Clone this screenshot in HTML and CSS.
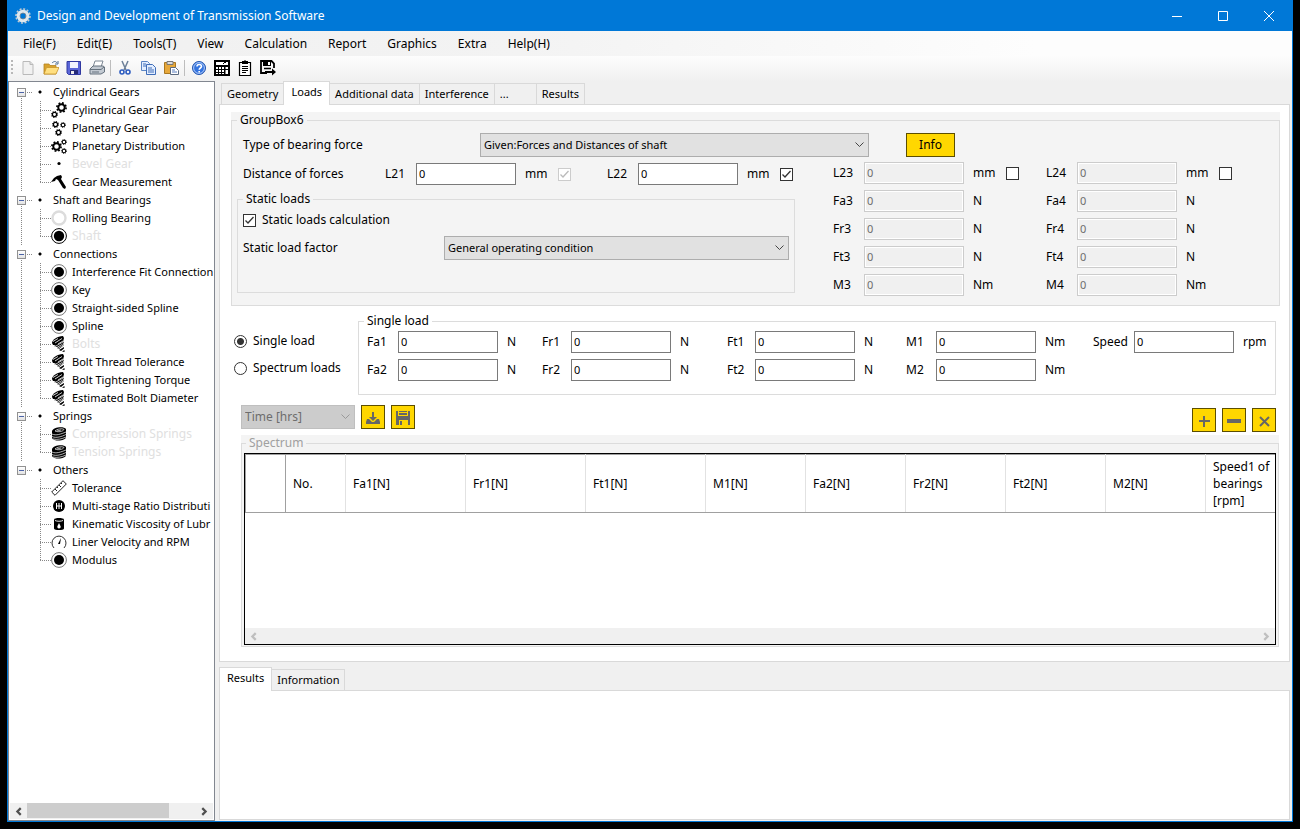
FILE: index.html
```html
<!DOCTYPE html>
<html lang="en">
<head>
    <meta charset="UTF-8">
    <meta name="viewport" content="width=device-width, initial-scale=1.0">
    <title>Design and Development of Transmission Software</title>
    <link rel="stylesheet" href="styles.css">
</head>
<body>

    <!-- Shared icon shapes -->
    <svg class="sprite" aria-hidden="true">
        <symbol id="gear" viewBox="0 0 16 16">
            <circle cx="8" cy="8" r="4.7" fill="none" stroke="currentColor" stroke-width="2.8"/>
            <circle cx="8" cy="8" r="6.7" fill="none" stroke="currentColor" stroke-width="2.4" stroke-dasharray="2.6 2.66"/>
        </symbol>
        <symbol id="i-pair" viewBox="0 0 16 16">
            <use href="#gear" x="5" y="0" width="11" height="11"/>
            <use href="#gear" x="0" y="9" width="7" height="7"/>
        </symbol>
        <symbol id="i-planet" viewBox="0 0 16 16">
            <use href="#gear" x="1" y="1" width="7" height="7"/>
            <use href="#gear" x="9" y="2" width="6" height="6"/>
            <use href="#gear" x="4" y="9" width="7" height="7"/>
        </symbol>
        <symbol id="i-dist" viewBox="0 0 16 16">
            <use href="#gear" x="0" y="3" width="11" height="11"/>
            <use href="#gear" x="10" y="1" width="6" height="6"/>
            <use href="#gear" x="10" y="10" width="6" height="6"/>
        </symbol>
        <symbol id="i-dot" viewBox="0 0 16 16">
            <circle cx="8" cy="7.5" r="1.6"/>
        </symbol>
        <symbol id="i-hammer" viewBox="0 0 16 16">
            <path d="M0 8 3 4l3-2 4-1 1 2-1 2 5 8-1 2-2-1-5-8-2-1-1 2z"/>
        </symbol>
        <symbol id="i-ring" viewBox="0 0 16 16">
            <circle cx="8" cy="8" r="6.5" fill="none" stroke="#dcdcdc" stroke-width="2.4"/>
        </symbol>
        <symbol id="i-disc" viewBox="0 0 16 16">
            <circle cx="8" cy="8" r="7.4" fill="none" stroke="#777"/>
            <circle cx="8" cy="8" r="5"/>
        </symbol>
        <symbol id="i-disc-dark" viewBox="0 0 16 16">
            <circle cx="8" cy="8" r="7.4" fill="none" stroke="#000"/>
            <circle cx="8" cy="8" r="5.2"/>
        </symbol>
        <symbol id="i-bolt" viewBox="0 0 16 16">
            <path d="M1 7C1 4 6 0 12 0l1 2-1 4-6 3-4 0z"/>
            <path d="m3 10 9-5 1 2-7 4zM6 12l6-4 1 1-5 4zM8 14l5-3 0 1.500-3 2.500zM11 15.500l2.500-1.500 0 2z"/>
            <path d="m2 5.500 5-3M4 7l7-4.500M7 8l5-3" stroke="#fff" stroke-width=".8"/>
            <path d="m4 10.500 9-5M7 12.500l6-4" stroke="#fff" stroke-width=".7"/>
        </symbol>
        <symbol id="i-spring" viewBox="0 0 16 16">
            <path d="M1 5c1-4 12-5 14-2v8c0 4-12 5-14 1z"/>
            <path d="M4 5c2-2 7-3 9-1.500-1 2-6 3-9 1.500M1 8c4 2 9 0 14-2M1 10.500c4 2 10 0 14-2M2 13c4 1 9 0 13-2M6 5l4-1" fill="none" stroke="#fff" stroke-width=".7"/>
        </symbol>
        <symbol id="i-ruler" viewBox="0 0 16 16">
            <path d="M.7 12 12 .7l3.300 3.300L4 15.300zM4 9l2 2M6 7l1 1M8 5l2 2M10 3l1 1" fill="none" stroke="#222"/>
        </symbol>
        <symbol id="i-ratio" viewBox="0 0 16 16">
            <circle cx="8" cy="8" r="6"/>
            <path d="M5.500 5v6M8 5v6M10.500 5v6M5 8h6" stroke="#fff" fill="none"/>
        </symbol>
        <symbol id="i-oil" viewBox="0 0 16 16">
            <path d="M3 3.500c0-2 10-2 10 0v9c0 2-10 2-10 0z"/>
            <path d="M4 4.500c2 1 6 1 8 0" fill="none" stroke="#fff" stroke-width=".9"/>
            <path d="M8 7 6.500 10a1.700 1.700 0 1 0 3 0z" fill="#fff"/>
        </symbol>
        <symbol id="i-gauge" viewBox="0 0 16 16">
            <path d="M3 14a7 7 0 1 1 10 0" fill="none" stroke="#333"/>
            <path d="m7 10 3-6-1 6z"/>
        </symbol>
    </svg>

    <div class="window">
        <header class="titlebar">
            <svg class="app-icon" viewBox="0 0 16 16"><circle cx="8" cy="8" r="4.6" fill="none" stroke="#dfe8ee" stroke-width="3.4"/><circle cx="8" cy="8" r="7" fill="none" stroke="#c3ccd3" stroke-width="1.6" stroke-dasharray="2 1.66"/><circle cx="8" cy="8" r="3" fill="none" stroke="#76818a" stroke-width=".8"/></svg>
            <h1>Design and Development of Transmission Software</h1>
            <div class="window-buttons">
                <button type="button" aria-label="Minimize"><svg viewBox="0 0 12 12"><path d="M1 6.500h10"/></svg></button>
                <button type="button" aria-label="Maximize"><svg viewBox="0 0 12 12"><path d="M1.500 1.500h9v9h-9z"/></svg></button>
                <button type="button" aria-label="Close"><svg viewBox="0 0 12 12"><path d="m1 1 10 10M11 1 1 11"/></svg></button>
            </div>
        </header>

        <nav class="menubar">
            <button type="button">File(F)</button>
            <button type="button">Edit(E)</button>
            <button type="button">Tools(T)</button>
            <button type="button">View</button>
            <button type="button">Calculation</button>
            <button type="button">Report</button>
            <button type="button">Graphics</button>
            <button type="button">Extra</button>
            <button type="button">Help(H)</button>
        </nav>

        <div class="toolbar">
            <span class="grip"></span>
            <button type="button" aria-label="New"><svg viewBox="0 0 16 16"><path d="M3 1.500h7l3 3v10H3z" fill="#f1f1f1" stroke="#b9b9b9"/><path d="M10 1.500v3h3" fill="#ddd" stroke="#b9b9b9"/></svg></button>
            <button type="button" aria-label="Open"><svg viewBox="0 0 16 16"><path d="M1 4h5l1 1.500h6V14H1z" fill="#d9a22c" stroke="#b58420" stroke-width=".8"/><path d="M3.500 7.500H16L13 14H1z" fill="#ffdf80" stroke="#c8962b" stroke-width=".8"/><path d="M9 3c2-2 4-2 5 0m1-2v3h-3" fill="none" stroke="#4f6f94"/></svg></button>
            <button type="button" aria-label="Save"><svg viewBox="0 0 16 16"><path d="M1 1.500h13.500v13H2.500L1 13z" fill="#5a66d8" stroke="#3038a0"/><path d="M4 2h8v6H4z" fill="#f2f5ff"/><path d="M4 10h8v4H4z" fill="#252a78"/><path d="M5 11h3v3H5z" fill="#eee"/></svg></button>
            <button type="button" aria-label="Print"><svg viewBox="0 0 16 16"><path d="M6 1h8l-2 6H4z" fill="#fff" stroke="#7d8894"/><path d="m1 9 3-3h10l1.500 1v5L12 14H1z" fill="#c3cad2" stroke="#66727e"/><path d="M1 9.500h11l3-2.500M3 12h7" fill="none" stroke="#66727e"/></svg></button>
            <span class="separator"></span>
            <button type="button" aria-label="Cut"><svg viewBox="0 0 16 16"><path d="m5 1 4 9M11 1 7 10" fill="none" stroke="#6c7f98" stroke-width="1.500"/><circle cx="5" cy="12" r="2" fill="none" stroke="#2d5cc0" stroke-width="1.600"/><circle cx="11" cy="12" r="2" fill="none" stroke="#2d5cc0" stroke-width="1.600"/></svg></button>
            <button type="button" aria-label="Copy"><svg viewBox="0 0 16 16"><path d="M1.500 1.500h6l2 2v7h-8z" fill="#e3eeff" stroke="#5a84c4"/><path d="M6.500 4.500h6l3 3v7h-9z" fill="#e3eeff" stroke="#3f6db8"/><path d="M3 4h3M3 6h3M8 8h4M8 10h6M8 12h6" stroke="#3f6db8"/></svg></button>
            <button type="button" aria-label="Paste"><svg viewBox="0 0 16 16"><path d="M1.500 2.500h11v11h-11z" fill="#e7a83a" stroke="#a97720"/><path d="M4 1.500h6v3H4z" fill="#ddd" stroke="#777"/><path d="M7.500 7.500h5l3 3v4h-8z" fill="#fff" stroke="#5b6a80"/><path d="M9 10h3M9 12h5" stroke="#5b7fc0"/></svg></button>
            <span class="separator"></span>
            <button type="button" aria-label="Help"><svg viewBox="0 0 16 16"><circle cx="8" cy="8" r="6.500" fill="#3474df" stroke="#2456ae"/><circle cx="8" cy="8" r="5.400" fill="none" stroke="#cfe0ff" stroke-width=".8"/><path d="M6 6.500c0-3 4.500-2.500 4.500 0C10.500 8 8.200 8 8.200 9.700M8.200 11v1.500" fill="none" stroke="#fff" stroke-width="1.600"/></svg></button>
            <button type="button" aria-label="Calculator"><svg viewBox="0 0 16 16"><path d="M0 0h16v16H0z"/><path d="M2 2h12v3H2zM2 7h2v2H2zM5 7h2v2H5zM8 7h2v2H8zM2 10h2v2H2zM5 10h2v2H5zM8 10h2v2H8zM2 13h2v1H2zM5 13h2v1H5zM8 13h2v1H8zM11.500 7H14v2h-2.500zM11.500 10H14v4h-2.500z" fill="#fff"/><path d="m9 4 2-2 1 1" fill="none" stroke="#000"/></svg></button>
            <button type="button" aria-label="Report"><svg viewBox="0 0 16 16"><path d="M2.500 2.500h11v13h-11z" fill="#fff" stroke="#000" stroke-width="1.200"/><path d="M5 1h2l1-1 1 1h2v3H5z"/><path d="M5 6.500h6M5 8.500h6M5 10.500h6M5 12.500h4" stroke="#000"/></svg></button>
            <button type="button" aria-label="Save as"><svg viewBox="0 0 16 16"><path d="M14 8V3.500L11.500 1H1v12h6" fill="none" stroke="#000" stroke-width="1.800"/><path d="M3 1h8v5H3z"/><path d="M8 2h2v3H8z" fill="#fff"/><path d="M4 8.500h7" stroke="#000" stroke-width="1.500"/><path d="M5 11h7V8.500l4 3.500-4 3.500V13H5z"/></svg></button>
        </div>

        <div class="workspace">
            <aside class="sidebar">
                <ul class="tree">
                    <li>
                        <div class="branch"><button type="button" class="expander" aria-label="Collapse"></button>Cylindrical Gears</div>
                        <ul>
                            <li><svg><use href="#i-pair"/></svg><a href="#">Cylindrical Gear Pair</a></li>
                            <li><svg><use href="#i-planet"/></svg><a href="#">Planetary Gear</a></li>
                            <li><svg><use href="#i-dist"/></svg><a href="#">Planetary Distribution</a></li>
                            <li><svg><use href="#i-dot"/></svg><a href="#" class="off">Bevel Gear</a></li>
                            <li><svg><use href="#i-hammer"/></svg><a href="#">Gear Measurement</a></li>
                        </ul>
                    </li>
                    <li>
                        <div class="branch"><button type="button" class="expander" aria-label="Collapse"></button>Shaft and Bearings</div>
                        <ul>
                            <li><svg><use href="#i-ring"/></svg><a href="#">Rolling Bearing</a></li>
                            <li><svg><use href="#i-disc-dark"/></svg><a href="#" class="off">Shaft</a></li>
                        </ul>
                    </li>
                    <li>
                        <div class="branch"><button type="button" class="expander" aria-label="Collapse"></button>Connections</div>
                        <ul>
                            <li><svg><use href="#i-disc"/></svg><a href="#">Interference Fit Connection</a></li>
                            <li><svg><use href="#i-disc"/></svg><a href="#">Key</a></li>
                            <li><svg><use href="#i-disc"/></svg><a href="#">Straight-sided Spline</a></li>
                            <li><svg><use href="#i-disc"/></svg><a href="#">Spline</a></li>
                            <li><svg><use href="#i-bolt"/></svg><a href="#" class="off">Bolts</a></li>
                            <li><svg><use href="#i-bolt"/></svg><a href="#">Bolt Thread Tolerance</a></li>
                            <li><svg><use href="#i-bolt"/></svg><a href="#">Bolt Tightening Torque</a></li>
                            <li><svg><use href="#i-bolt"/></svg><a href="#">Estimated Bolt Diameter</a></li>
                        </ul>
                    </li>
                    <li>
                        <div class="branch"><button type="button" class="expander" aria-label="Collapse"></button>Springs</div>
                        <ul>
                            <li><svg><use href="#i-spring"/></svg><a href="#" class="off">Compression Springs</a></li>
                            <li><svg><use href="#i-spring"/></svg><a href="#" class="off">Tension Springs</a></li>
                        </ul>
                    </li>
                    <li>
                        <div class="branch"><button type="button" class="expander" aria-label="Collapse"></button>Others</div>
                        <ul>
                            <li><svg><use href="#i-ruler"/></svg><a href="#">Tolerance</a></li>
                            <li><svg><use href="#i-ratio"/></svg><a href="#">Multi-stage Ratio Distributi</a></li>
                            <li><svg><use href="#i-oil"/></svg><a href="#">Kinematic Viscosity of Lubr</a></li>
                            <li><svg><use href="#i-gauge"/></svg><a href="#">Liner Velocity and RPM</a></li>
                            <li><svg><use href="#i-disc"/></svg><a href="#">Modulus</a></li>
                        </ul>
                    </li>
                </ul>
                <div class="scrollbar">
                    <button type="button" aria-label="Scroll left"><svg viewBox="0 0 8 8"><path d="M6 1 3 4l3 3"/></svg></button>
                    <div class="track"><div class="thumb"></div></div>
                    <button type="button" aria-label="Scroll right"><svg viewBox="0 0 8 8"><path d="m2 1 3 3-3 3"/></svg></button>
                </div>
            </aside>

            <main class="content">
                <div class="tabs" role="tablist">
                    <button type="button" role="tab">Geometry</button>
                    <button type="button" role="tab" class="active" aria-selected="true">Loads</button>
                    <button type="button" role="tab">Additional data</button>
                    <button type="button" role="tab">Interference</button>
                    <button type="button" role="tab" class="more">...</button>
                    <button type="button" role="tab">Results</button>
                </div>

                <section class="page">
                    <div class="panel">
                        <fieldset class="forces">
                            <legend>GroupBox6</legend>
                            <div class="bearing-row">
                                <label for="force-type">Type of bearing force</label>
                                <select id="force-type"><option>Given:Forces and Distances of shaft</option></select>
                                <button type="button" class="yellow info">Info</button>
                            </div>
                            <div class="forces-body">
                                <div class="forces-left">
                                    <div class="distance-row">
                                        <span class="caption">Distance of forces</span>
                                        <div class="field"><label for="l21">L21</label><input type="text" id="l21" value="0"><span class="unit">mm</span><input type="checkbox" aria-label="Use L21" checked disabled></div>
                                        <div class="field"><label for="l22">L22</label><input type="text" id="l22" value="0"><span class="unit">mm</span><input type="checkbox" aria-label="Use L22" checked></div>
                                    </div>
                                    <fieldset class="static-loads">
                                        <legend>Static loads</legend>
                                        <label class="check"><input type="checkbox" checked>Static loads calculation</label>
                                        <div class="factor-row">
                                            <label for="factor">Static load factor</label>
                                            <select id="factor"><option>General operating condition</option></select>
                                        </div>
                                    </fieldset>
                                </div>
                                <div class="force-column">
                                    <div class="field"><label for="l23">L23</label><input type="text" id="l23" value="0" disabled><span class="unit">mm</span><input type="checkbox" aria-label="Use L23"></div>
                                    <div class="field"><label for="fa3">Fa3</label><input type="text" id="fa3" value="0" disabled><span class="unit">N</span></div>
                                    <div class="field"><label for="fr3">Fr3</label><input type="text" id="fr3" value="0" disabled><span class="unit">N</span></div>
                                    <div class="field"><label for="ft3">Ft3</label><input type="text" id="ft3" value="0" disabled><span class="unit">N</span></div>
                                    <div class="field"><label for="m3">M3</label><input type="text" id="m3" value="0" disabled><span class="unit">Nm</span></div>
                                </div>
                                <div class="force-column">
                                    <div class="field"><label for="l24">L24</label><input type="text" id="l24" value="0" disabled><span class="unit">mm</span><input type="checkbox" aria-label="Use L24"></div>
                                    <div class="field"><label for="fa4">Fa4</label><input type="text" id="fa4" value="0" disabled><span class="unit">N</span></div>
                                    <div class="field"><label for="fr4">Fr4</label><input type="text" id="fr4" value="0" disabled><span class="unit">N</span></div>
                                    <div class="field"><label for="ft4">Ft4</label><input type="text" id="ft4" value="0" disabled><span class="unit">N</span></div>
                                    <div class="field"><label for="m4">M4</label><input type="text" id="m4" value="0" disabled><span class="unit">Nm</span></div>
                                </div>
                            </div>
                        </fieldset>
                    </div>

                    <div class="load-row">
                        <div class="load-mode">
                            <label class="check"><input type="radio" name="mode" checked>Single load</label>
                            <label class="check"><input type="radio" name="mode">Spectrum loads</label>
                        </div>
                        <fieldset class="single-load">
                            <legend>Single load</legend>
                            <div class="load-grid">
                                <label for="fa1">Fa1</label><input type="text" id="fa1" value="0"><span class="unit">N</span>
                                <label for="fr1">Fr1</label><input type="text" id="fr1" value="0"><span class="unit">N</span>
                                <label for="ft1">Ft1</label><input type="text" id="ft1" value="0"><span class="unit">N</span>
                                <label for="m1">M1</label><input type="text" id="m1" value="0"><span class="unit">Nm</span>
                                <label for="speed">Speed</label><input type="text" id="speed" value="0"><span class="unit">rpm</span>
                                <label for="fa2">Fa2</label><input type="text" id="fa2" value="0"><span class="unit">N</span>
                                <label for="fr2">Fr2</label><input type="text" id="fr2" value="0"><span class="unit">N</span>
                                <label for="ft2">Ft2</label><input type="text" id="ft2" value="0"><span class="unit">N</span>
                                <label for="m2">M2</label><input type="text" id="m2" value="0"><span class="unit">Nm</span>
                            </div>
                        </fieldset>
                    </div>

                    <div class="spectrum-tools">
                        <select class="time" aria-label="Time unit" disabled><option>Time [hrs]</option></select>
                        <button type="button" class="yellow" aria-label="Import"><svg viewBox="0 0 16 16"><path d="M7 2h2v5h3L8 11 4 7h3z"/><path d="M2 9h2l3 3h2l3-3h2l1 3v2H1v-2z"/></svg></button>
                        <button type="button" class="yellow" aria-label="Save spectrum"><svg viewBox="0 0 16 16"><path d="M1 1h2v5h10V1h2v14h-2v-5H4v5H1z"/><path d="M4 1h8v1H4zM4 3h8v2H4zM5 11h2v4H5z"/></svg></button>
                        <span class="spacer"></span>
                        <button type="button" class="yellow low" aria-label="Add row"><svg viewBox="0 0 16 16"><path d="M7 3h2v4h5v2H9v5H7V9H3V7h4z"/></svg></button>
                        <button type="button" class="yellow low" aria-label="Remove row"><svg viewBox="0 0 16 16"><path d="M1 6h14v4H1z"/></svg></button>
                        <button type="button" class="yellow low" aria-label="Clear"><svg viewBox="0 0 16 16"><path d="m4 4 9 9M13 4 4 13" stroke="#666" stroke-width="2"/></svg></button>
                    </div>

                    <div class="panel spectrum-panel">
                        <fieldset class="spectrum">
                            <legend>Spectrum</legend>
                            <div class="grid-view">
                                <div class="grid-clip">
                                    <table>
                                        <colgroup>
                                            <col class="w-40"><col class="w-60"><col class="w-120"><col class="w-120"><col class="w-120">
                                            <col class="w-100"><col class="w-100"><col class="w-100"><col class="w-100"><col class="w-100"><col class="w-100">
                                        </colgroup>
                                        <thead>
                                            <tr>
                                                <td></td><th>No.</th><th>Fa1[N]</th><th>Fr1[N]</th><th>Ft1[N]</th><th>M1[N]</th>
                                                <th>Fa2[N]</th><th>Fr2[N]</th><th>Ft2[N]</th><th>M2[N]</th><th>Speed1 of bearings [rpm]</th>
                                            </tr>
                                        </thead>
                                    </table>
                                </div>
                                <div class="scrollbar idle">
                                    <button type="button" aria-label="Scroll left"><svg viewBox="0 0 8 8"><path d="M6 1 3 4l3 3"/></svg></button>
                                    <div class="track"></div>
                                    <button type="button" aria-label="Scroll right"><svg viewBox="0 0 8 8"><path d="m2 1 3 3-3 3"/></svg></button>
                                </div>
                            </div>
                        </fieldset>
                    </div>
                </section>

                <div class="tabs result-tabs" role="tablist">
                    <button type="button" role="tab" class="active" aria-selected="true">Results</button>
                    <button type="button" role="tab">Information</button>
                </div>
                <section class="results"></section>
            </main>
        </div>
    </div>

</body>
</html>
```

FILE: styles.css
```css
* {
    box-sizing: border-box;
}

body {
    margin: 0;
    padding: 0 7px 7px;
    height: 100vh;
    background: #000;
    color: #000;
    font-family: "Noto Sans", "Open Sans", sans-serif;
    font-size: 12px;
    line-height: 16px;
    overflow: hidden;
}

button, input, select {
    font: inherit;
    color: inherit;
    margin: 0;
    padding: 0;
    border: 0;
    border-radius: 0;
    background: none;
}

.sprite {
    position: absolute;
    width: 0;
    height: 0;
}

.window {
    display: flex;
    flex-direction: column;
    height: 100%;
    border: 1px solid #0078d7;
    border-top: 0;
    background: #f0f0f0;
}

/* Title bar */
.titlebar {
    display: flex;
    align-items: center;
    height: 31px;
    flex: none;
    background: #0078d7;
    color: #fff;
}

.app-icon {
    width: 16px;
    height: 16px;
    margin: 0 6px 0 7px;
}

.titlebar h1 {
    margin: 0;
    flex: 1;
    font-size: 12px;
    font-weight: normal;
}

.window-buttons {
    display: flex;
}

.window-buttons button {
    width: 46px;
    height: 31px;
}

.window-buttons svg {
    width: 12px;
    height: 12px;
    display: block;
    margin: 0 auto;
    fill: none;
    stroke: #fff;
}

/* Menu and toolbar */
.menubar {
    display: flex;
    flex: none;
    gap: 1px;
    height: 25px;
    padding-left: 5px;
    background: linear-gradient(90deg, #f0f0f0, #f3f3f3 40%, #fdfdfd 80%);
}

.menubar button {
    padding: 0 10px;
}

.toolbar {
    display: flex;
    align-items: center;
    flex: none;
    height: 25px;
    padding: 0 0 2px 3px;
    background: linear-gradient(#fdfdfd, #f0f0f0);
}

.toolbar button {
    width: 23px;
    height: 22px;
}

.toolbar svg {
    display: block;
    width: 16px;
    height: 16px;
    margin: 0 auto;
}

.grip {
    width: 2px;
    height: 16px;
    margin-right: 3px;
    background: repeating-linear-gradient(#b8b8b8 0 2px, transparent 2px 4px);
}

.separator {
    width: 1px;
    height: 16px;
    margin: 0 2px;
    background: #bdbdbd;
}

.workspace {
    display: flex;
    flex: 1;
    min-height: 0;
}

/* Tree */
.sidebar {
    display: flex;
    flex-direction: column;
    flex: none;
    width: 207px;
    padding: 1px;
    border: 1px solid #828790;
    background: #fff;
}

.tree {
    flex: 1;
    overflow: hidden;
    font-size: 11px;
}

.tree, .tree ul {
    margin: 0;
    padding: 0;
    list-style: none;
}

.tree li {
    white-space: nowrap;
}

/* dotted trunk down the left side, dropped for the last branch */
.tree > li {
    background: repeating-linear-gradient(#888 0 1px, transparent 1px 2px) 11px 9px / 1px 100% no-repeat;
}

.tree > li:last-child {
    background: none;
}

.branch {
    display: flex;
    align-items: center;
    height: 18px;
    padding-left: 7px;
    background: radial-gradient(circle at 2px 2px, #000 0 1px, transparent 2px) 28px 7px / 4px 4px no-repeat,
        repeating-linear-gradient(90deg, #888 0 1px, transparent 1px 2px) 17px 9px / 6px 1px no-repeat;
}

.expander {
    width: 9px;
    height: 9px;
    margin-right: 27px;
    border: 1px solid #919191;
    background: linear-gradient(#4b63a7, #4b63a7) center / 5px 1px no-repeat, linear-gradient(#fff, #e2e2e2);
}

.tree ul li {
    display: flex;
    align-items: center;
    height: 18px;
    padding-left: 41px;
    background: repeating-linear-gradient(#888 0 1px, transparent 1px 2px) 30px 0 / 1px 100% no-repeat,
        repeating-linear-gradient(90deg, #888 0 1px, transparent 1px 2px) 30px 9px / 11px 1px no-repeat;
}

.tree ul li:last-child {
    background-size: 1px 9px, 11px 1px;
}

.tree svg {
    flex: none;
    width: 16px;
    height: 16px;
    margin-right: 5px;
}

.tree a {
    color: inherit;
    text-decoration: none;
}

.tree a.off {
    color: #e0e0e0;
    font-size: 12px;
}

.scrollbar {
    display: flex;
    flex: none;
    height: 16px;
    background: #f0f0f0;
}

.scrollbar button {
    width: 17px;
}

.scrollbar svg {
    display: block;
    width: 9px;
    height: 9px;
    margin: 0 auto;
    fill: none;
    stroke: #505050;
    stroke-width: 2;
}

.scrollbar.idle svg {
    stroke: #bfbfbf;
}

.track {
    flex: 1;
}

.thumb {
    width: 84%;
    height: 15px;
    background: #cdcdcd;
}

/* Tabs */
.content {
    display: flex;
    flex-direction: column;
    flex: 1;
    min-width: 0;
    padding: 0 2px 1px 4px;
}

.tabs {
    display: flex;
    align-items: flex-end;
    flex: none;
    height: 24px;
    padding-left: 2px;
    margin-bottom: -1px;
    z-index: 1;
    font-size: 11px;
}

.tabs button {
    height: 22px;
    padding: 0 5px;
    border: 1px solid #d9d9d9;
    margin-right: -1px;
    background: #f0f0f0;
}

.tabs button.active {
    height: 24px;
    padding: 0 7px 3px;
    border-bottom: 0;
    background: #fff;
}

.tabs button.more {
    width: 43px;
    text-align: left;
}

.result-tabs {
    margin-top: 5px;
    padding-left: 0;
}

.page, .results {
    border: 1px solid #d9d9d9;
    background: #fff;
}

.page {
    padding: 7px 9px 14px 11px;
}

.results {
    flex: 1;
}

/* Group boxes */
.panel {
    background: #f4f4f4;
}

fieldset {
    min-width: 0;
    margin: 0;
    padding: 0;
    border: 1px solid #dcdcdc;
}

legend {
    padding: 0 3px;
}

label, .unit, .caption {
    white-space: nowrap;
}

input[type="text"] {
    width: 100px;
    height: 22px;
    padding: 0 2px 1px;
    border: 1px solid #7a7a7a;
    background: #fff;
    font-size: 11px;
}

input[type="text"]:disabled {
    border-color: #ccc;
    background: #f0f0f0;
    box-shadow: inset 0 0 0 1px #fff;
    color: #6d6d6d;
}

input[type="checkbox"], input[type="radio"] {
    appearance: none;
    flex: none;
    width: 13px;
    height: 13px;
    border: 1px solid #333;
    background: #fff;
}

input[type="checkbox"]:checked {
    background: #fff url("data:image/svg+xml,%3Csvg xmlns='http://www.w3.org/2000/svg' viewBox='0 0 11 11'%3E%3Cpath d='m1.500 5.500 2.500 2.500 5.500-6' fill='none' stroke='%23333' stroke-width='1.300'/%3E%3C/svg%3E");
}

input[type="checkbox"]:checked:disabled {
    border-color: #ccc;
    background-image: url("data:image/svg+xml,%3Csvg xmlns='http://www.w3.org/2000/svg' viewBox='0 0 11 11'%3E%3Cpath d='m1.500 5.500 2.500 2.500 5.500-6' fill='none' stroke='%23bbb' stroke-width='1.300'/%3E%3C/svg%3E");
}

input[type="radio"] {
    border-radius: 50%;
}

input[type="radio"]:checked {
    background: radial-gradient(circle, #333 0 3px, #fff 4px);
}

select {
    appearance: none;
    height: 24px;
    padding: 0 20px 0 3px;
    border: 1px solid #adadad;
    background: #e1e1e1 url("data:image/svg+xml,%3Csvg xmlns='http://www.w3.org/2000/svg' viewBox='0 0 9 6'%3E%3Cpath d='m.5.500 4 4 4-4' fill='none' stroke='%23444'/%3E%3C/svg%3E") right 4px center / 9px 6px no-repeat;
    font-size: 11px;
}

.yellow {
    width: 24px;
    height: 24px;
    border: 1px solid #5c4e00;
    background: #ffd700;
}

.yellow svg {
    display: block;
    width: 16px;
    height: 16px;
    margin: 2px auto 0;
    fill: #666;
}

.field {
    display: flex;
    align-items: center;
    height: 22px;
}

.field label {
    width: 31px;
}

.unit {
    padding-left: 9px;
}

.field .unit {
    width: 42px;
}

.forces {
    padding: 5px 0 0 5px;
    height: 194px;
}

.bearing-row {
    display: flex;
    align-items: center;
    padding-left: 6px;
}

.bearing-row label {
    width: 237px;
}

.bearing-row select {
    width: 389px;
}

.bearing-row .info {
    width: 49px;
    margin-left: 37px;
}

.forces-body {
    display: flex;
    padding-top: 5px;
}

.forces-left {
    width: 558px;
    margin-right: 38px;
    padding-top: 1px;
}

.distance-row {
    display: flex;
    gap: 36px;
    padding-left: 6px;
}

.distance-row .caption {
    width: 106px;
    line-height: 22px;
}

.static-loads {
    height: 102px;
    margin-top: 6px;
    padding: 5px 5px 0;
}

.check {
    display: flex;
    align-items: center;
    gap: 6px;
    height: 16px;
}

.factor-row {
    display: flex;
    align-items: center;
    justify-content: space-between;
    padding-top: 8px;
}

.factor-row select {
    width: 345px;
}

.force-column {
    display: flex;
    flex-direction: column;
    gap: 6px;
    margin-right: 27px;
}

.load-row {
    display: flex;
    padding: 7px 4px 0 3px;
}

.load-mode {
    display: flex;
    flex-direction: column;
    gap: 11px;
    width: 124px;
    padding-top: 20px;
}

.single-load {
    flex: 1;
    height: 82px;
    padding: 2px 0 0 8px;
}

.single-load legend {
    margin-left: -3px;
}

.load-grid {
    display: grid;
    grid-template-columns: 31px 100px 44px 29px 100px 56px 28px 100px 51px 30px 100px 57px 41px 100px auto;
    row-gap: 6px;
    align-items: center;
}

.spectrum-tools {
    display: flex;
    gap: 6px;
    padding: 10px 4px 3px 10px;
}

.spectrum-tools .low {
    margin: 3px 0 -3px;
}

.spacer {
    flex: 1;
}

.time {
    width: 114px;
    font-size: 12px;
}

.time:disabled {
    border-color: #bfbfbf;
    background-color: #ccc;
    background-image: url("data:image/svg+xml,%3Csvg xmlns='http://www.w3.org/2000/svg' viewBox='0 0 9 6'%3E%3Cpath d='m.5.500 4 4 4-4' fill='none' stroke='%23999'/%3E%3C/svg%3E");
    color: #6d6d6d;
    opacity: 1;
}

/* Spectrum table */
.spectrum-panel {
    margin: 3px 1px 0 10px;
}

.spectrum {
    padding: 2px 2px 1px;
}

.spectrum legend {
    margin-left: 2px;
    color: #a0a0a0;
}

.grid-view {
    display: flex;
    flex-direction: column;
    height: 192px;
    border: 1px solid #000;
    background: #fff;
}

.grid-clip {
    flex: 1;
    overflow: hidden;
}

table {
    width: 1061px;
    border-collapse: collapse;
    table-layout: fixed;
}

.w-40 {
    width: 40px;
}

.w-60 {
    width: 60px;
}

.w-100 {
    width: 100px;
}

.w-120 {
    width: 120px;
}

thead td, th {
    height: 58px;
    padding: 0 7px;
    border: 1px solid #a0a0a0;
    border-right-color: #e2e2e2;
    font-weight: normal;
    line-height: 17px;
    text-align: left;
}

thead td {
    border-right-color: #a0a0a0;
}

th:last-child {
    padding-right: 24px;
}
```
